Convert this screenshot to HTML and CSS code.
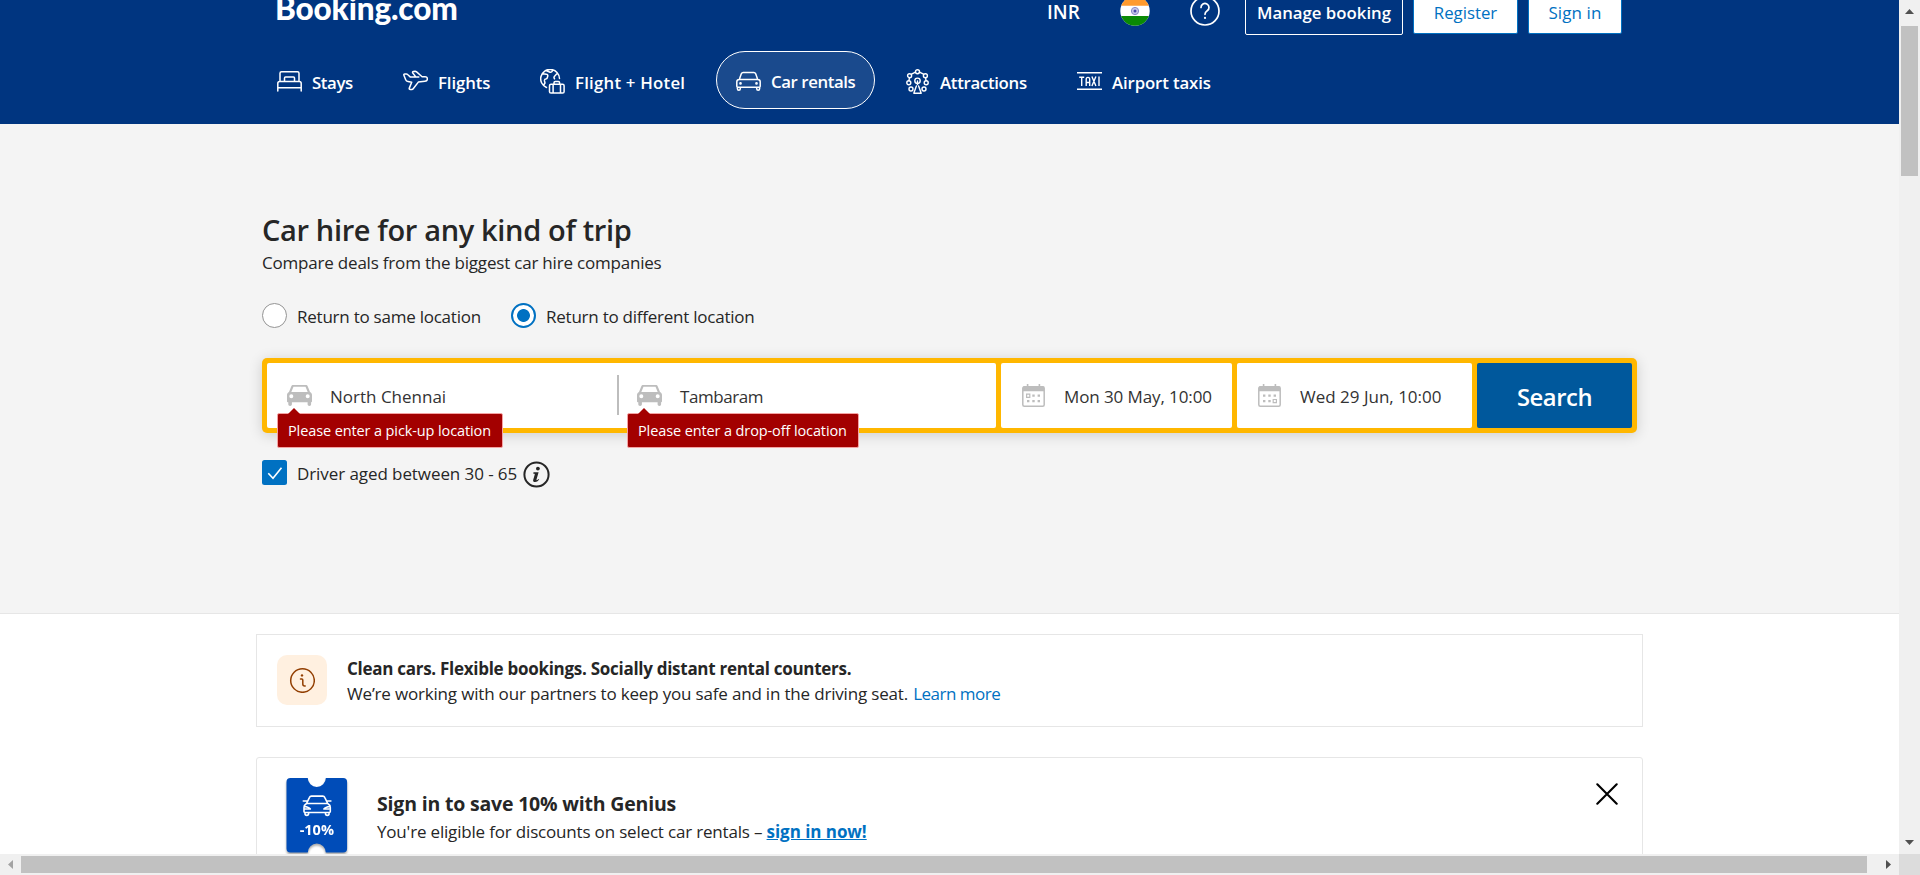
FILE: index.html
```html
<!DOCTYPE html>
<html lang="en">
<head>
<meta charset="utf-8">
<title>Booking.com | Car rentals</title>
<link rel="stylesheet" href="styles.css">
</head>
<body>
<svg width="0" height="0" class="defs" aria-hidden="true">
  <symbol id="car-solid" viewBox="0 0 25 21">
    <path fill="#bdbdbd" fill-rule="evenodd" d="M6.3 0h12.4c1 0 1.7.5 2.1 1.4L23 7c1.200.6 2 1.700 2 3v6.300c0 .6-.3 1-.9 1v2c0 .9-.7 1.700-1.700 1.700s-1.800-.8-1.800-1.700v-2H4.900v2c0 .9-.8 1.700-1.800 1.700s-1.800-.8-1.800-1.700v-2C.4 17.300 0 16.900 0 16.300V10c0-1.300.8-2.400 2-3l2.200-5.600C4.600.5 5.300 0 6.300 0zM6.500 1.700 4.300 7h16.400l-2.200-5.300zM4.300 9.300a2 2 0 1 0 0 4 2 2 0 0 0 0-4zm16.400 0a2 2 0 1 0 0 4 2 2 0 0 0 0-4z"/>
  </symbol>
</svg>
<div class="window">
  <main class="page">
    <header class="header">
      <div class="topbar">
        <a class="logo">Booking.com</a>
        <span class="currency">INR</span>
        <svg class="flag" width="30" height="30" viewBox="0 0 30 30">
          <clipPath id="round"><circle cx="15" cy="15" r="14.700"/></clipPath>
          <g clip-path="url(#round)">
            <path fill="#fff" d="M0 0h30v30H0z"/><path fill="#ff9a2e" d="M0 0h30v9.700H0z"/><path fill="#0a8a05" d="M0 20h30v10H0z"/>
          </g>
          <circle cx="15" cy="15" r="3.600" fill="#c9c9ea" stroke="#8787c8" stroke-width="1"/><circle cx="15" cy="15" r="1.500" fill="#4b4baa"/>
        </svg>
        <svg class="help" width="30" height="30" viewBox="0 0 30 30" fill="none" stroke="#fff" stroke-width="1.700" stroke-linecap="round">
          <circle cx="15" cy="15" r="14"/>
          <path d="M11 11.500a4 4 0 1 1 6.200 3.300c-1.400.9-2.200 1.700-2.200 3.500"/>
          <circle cx="15" cy="21.900" r="1.100" fill="#fff" stroke="none"/>
        </svg>
        <a class="btn btn-outline">Manage booking</a>
        <a class="btn btn-light">Register</a>
        <a class="btn btn-light btn-signin">Sign in</a>
      </div>
      <nav class="tabs">
        <a class="tab">
          <svg width="25" height="25" viewBox="0 0 25 25" fill="none" stroke="#fff" stroke-width="1.500" stroke-linecap="round" stroke-linejoin="round"><path d="M3 12.500V4.300c0-.9.6-1.500 1.500-1.500h16c.9 0 1.500.6 1.500 1.500v8.200M7.500 12V9c0-.6.400-1 1-1h8c.6 0 1 .4 1 1v3M.8 22v-7.600c0-1.200.8-1.900 1.900-1.900h19.600c1.100 0 1.900.7 1.900 1.900V22M1 18.800h23"/></svg>
          <span class="t-stays">Stays</span>
        </a>
        <a class="tab">
          <svg width="25" height="25" viewBox="0 0 25 25" fill="none" stroke="#fff" stroke-width="1.500" stroke-linecap="round" stroke-linejoin="round"><path d="M.9 6.200c-.3-.8.2-1.200.9-1.200h1.600c.5 0 .9.200 1.200.5l2.600 2.400h5.600l-3-3.900c-.5-.8-.2-1.400.6-1.500l1.700-.2c.6 0 1 .2 1.500.6l5.500 4.900h3c1.500 0 2.300 1 2.300 2.100s-1 2.200-2.500 2.400l-6.600.8-5.100 6.700c-.3.400-.8.600-1.300.6H7.200c-.8 0-1.200-.6-.9-1.300l2.400-5.900-3.700-.6c-1.100-.2-1.900-.8-2.300-1.900zM12.800 7.900h3"/></svg>
          <span class="t-flights">Flights</span>
        </a>
        <a class="tab">
          <svg width="25" height="25" viewBox="0 0 25 25" fill="none" stroke="#fff" stroke-width="1.500" stroke-linecap="round" stroke-linejoin="round"><path d="M6.500 18.500A9.400 9.400 0 1 1 19.500 9.500M2.500 4.800l4 .5c1 .1 1.500 1 1.200 1.900L7.200 9c-.2.700-.8 1-1.500 1.100-1 .1-1.400 1-1.200 1.900l.5 2-1 1.500M6 1.500 9.500 3c.8.400 1.600.3 2.200-.3l1.100-1.400M14.500 9.800c-.7-1-.6-2 .2-2.700l2.400-2.500"/><path d="M11 15.300h11.600c.9 0 1.500.6 1.500 1.400v6c0 .8-.6 1.400-1.500 1.400H11c-.9 0-1.500-.6-1.500-1.400v-6c0-.8.6-1.400 1.500-1.400zM14 15v-1.300c0-.8.500-1.300 1.300-1.300h3c.8 0 1.300.5 1.300 1.300V15M13.100 15.500V24M20.500 15.500V24"/></svg>
          <span class="t-combo">Flight + Hotel</span>
        </a>
        <a class="tab tab-active">
          <svg width="25" height="25" viewBox="0 0 25 25" fill="none" stroke="#fff" stroke-width="1.500" stroke-linecap="round" stroke-linejoin="round"><path d="m3.300 10.500 2-5.700C5.700 3.900 6.300 3.600 7.200 3.600h10.600c.9 0 1.500.3 1.900 1.200l2 5.700M3.300 10.500h18.400c1.500 0 2.500.9 2.500 2.300v4.400c0 .6-.4 1-1 1H1.800c-.6 0-1-.4-1-1v-4.400c0-1.400 1-2.300 2.500-2.300zM1.400 18.500v1.200c0 1 .6 1.500 1.400 1.500s1.500-.5 1.500-1.500v-1.200M20.700 18.500v1.200c0 1 .7 1.500 1.500 1.500s1.400-.5 1.400-1.500v-1.200"/><circle cx="4.500" cy="14.400" r=".6"/><circle cx="20.500" cy="14.400" r=".6"/></svg>
          <span class="t-cars">Car rentals</span>
        </a>
        <a class="tab">
          <svg width="23" height="25" viewBox="0 0 23 25" fill="none" stroke="#fff" stroke-width="1.400" stroke-linecap="round" stroke-linejoin="round"><circle cx="11.500" cy="2.700" r="2"/><circle cx="3.600" cy="6.700" r="2"/><circle cx="19.400" cy="6.700" r="2"/><circle cx="2.800" cy="13.800" r="2"/><circle cx="20.200" cy="13.800" r="2"/><circle cx="5" cy="20" r="2"/><circle cx="18" cy="20" r="2"/><circle cx="11.500" cy="11.800" r="2.700"/><path d="m10.400 17-2.600 7.200h7.400L12.600 17M9.500 3.200 5.500 5.200M13.500 3.200l4 2M3.400 8.700l-.4 3M19.600 8.700l.4 3M11.500 12v3.500"/></svg>
          <span class="t-attr">Attractions</span>
        </a>
        <a class="tab">
          <svg width="25" height="25" viewBox="0 0 25 25" fill="none" stroke="#fff" stroke-width="1.500" stroke-linejoin="round"><path d="M0 3.800h25M0 20.300h25"/><path stroke-width="1.400" d="M2.200 8.300h5M4.700 8.300V17M9.200 17v-6.700c0-2.600 3.500-2.600 3.500 0V17M9.200 13.500h3.500M14.900 7.600l4 9.400M18.900 7.600l-4 9.400M22 7.600V17"/></svg>
          <span class="t-taxi">Airport taxis</span>
        </a>
      </nav>
    </header>

    <section class="hero">
      <h1 class="title">Car hire for any kind of trip</h1>
      <p class="subtitle">Compare deals from the biggest car hire companies</p>
      <div class="radios">
        <label class="radio radio-same"><i class="dot"></i><span>Return to same location</span></label>
        <label class="radio radio-diff"><i class="dot dot-on"></i><span>Return to different location</span></label>
      </div>
      <div class="search">
        <div class="places">
          <div class="place">
            <svg width="25" height="21"><use href="#car-solid"/></svg><span>North Chennai</span>
            <div class="error error-pick">Please enter a pick-up location</div>
          </div>
          <div class="divider"></div>
          <div class="place place-drop">
            <svg width="25" height="21"><use href="#car-solid"/></svg><span class="t-drop">Tambaram</span>
            <div class="error error-drop">Please enter a drop-off location</div>
          </div>
        </div>
        <div class="date date-from">
          <svg width="23" height="23" viewBox="0 0 23 23" fill="none" stroke="#bdbdbd"><rect x=".8" y="2.800" width="21.400" height="19.400" rx="1.500" stroke-width="1.500"/><path fill="#bdbdbd" stroke="none" d="M1 2.500h21v4.800H1zM4.800 0h1.600v3H4.800zM16.600 0h1.600v3h-1.600z"/><g fill="#bdbdbd" stroke="none"><path d="M10.300 10.500h2.400v2.200h-2.400zM15.600 10.500H18v2.200h-2.400zM5 16h2.400v2.200H5zM10.300 16h2.400v2.200h-2.400zM15.600 16H18v2.200h-2.400z"/></g><path stroke-width="1.200" d="M4.600 10.100h3.200v3.200H4.600z"/></svg>
          <span class="t-from">Mon 30 May, 10:00</span>
        </div>
        <div class="date date-to">
          <svg width="23" height="23" viewBox="0 0 23 23" fill="none" stroke="#bdbdbd"><rect x=".8" y="2.800" width="21.400" height="19.400" rx="1.500" stroke-width="1.500"/><path fill="#bdbdbd" stroke="none" d="M1 2.500h21v4.800H1zM4.800 0h1.600v3H4.800zM16.600 0h1.600v3h-1.600z"/><g fill="#bdbdbd" stroke="none"><path d="M5 10.500h2.400v2.200H5zM10.300 10.500h2.400v2.200h-2.400zM15.600 10.500H18v2.200h-2.400zM5 16h2.400v2.200H5zM10.300 16h2.400v2.200h-2.400z"/></g><path stroke-width="1.200" d="M15.200 15.500h3.200v3.200h-3.200z"/></svg>
          <span>Wed 29 Jun, 10:00</span>
        </div>
        <button class="go">Search</button>
      </div>
      <div class="age">
        <svg width="25" height="25" viewBox="0 0 25 25"><rect width="25" height="25" rx="2.500" fill="#0071c2"/><path d="m6.300 13.200 4.700 5 8.500-10.500" fill="none" stroke="#fff" stroke-width="1.600"/></svg>
        <span class="age-text">Driver aged between 30 - 65</span>
        <svg width="27" height="27" viewBox="0 0 27 27"><circle cx="13.500" cy="13.500" r="12.100" fill="none" stroke="#262626" stroke-width="2"/><circle cx="14.900" cy="7.600" r="1.900" fill="#262626"/><path d="M10.500 11.200h5.100l-2.100 7.300c-.2.700.3.900.8.600l1.500-1.100.4.600c-1.200 1.700-2.700 2.500-4.100 2.500-1.600 0-2.300-1-1.900-2.400l1.500-5c.2-.7 0-1-.6-1h-.8z" fill="#262626"/></svg>
      </div>
    </section>

    <section class="cards">
      <article class="card notice">
        <div class="notice-icon">
          <svg width="26" height="26" viewBox="0 0 26 26" fill="none" stroke="#923e01" stroke-width="1.500" stroke-linecap="round"><circle cx="13.500" cy="13.500" r="11.800"/><path d="M11.500 12h1.300c.6 0 1 .4 1 1v3.900c0 1.200.7 2 1.900 2h.5"/><circle cx="13" cy="8.400" r="1.200" fill="#923e01" stroke="none"/></svg>
        </div>
        <div class="notice-body">
          <h2>Clean cars. Flexible bookings. Socially distant rental counters.</h2>
          <p>We’re working with our partners to keep you safe and in the driving seat. <a class="more">Learn more</a></p>
        </div>
      </article>
      <article class="card genius">
        <svg class="ticket" width="61" height="76" viewBox="0 0 61 76">
          <path fill="#004cb8" d="M4.500 0h17.300a9 9 0 0 0 18 0h17.300a4 4 0 0 1 4 4v66.500a4 4 0 0 1-4 4H39.800a9 9 0 0 0-18 0H4.500a4 4 0 0 1-4-4V4a4 4 0 0 1 4-4z"/>
          <g fill="none" stroke="#fff" stroke-width="1.600" stroke-linecap="round" stroke-linejoin="round"><path d="m20.500 25.500 3-6.200c.4-.9 1-1.200 1.900-1.200h11.400c.9 0 1.500.3 1.900 1.200l3 6.200M17.300 23h3.500M41.400 23h3.500M20.500 25.500h21.200c1.600.9 2.600 2.300 2.600 4v4c0 .6-.4 1-1 1H19c-.6 0-1-.4-1-1v-4c0-1.700 1-3.100 2.500-4zM19 34.700v1.100c0 1 .7 1.600 1.800 1.600s1.800-.6 1.800-1.600v-1.100M39.500 34.700v1.100c0 1 .7 1.600 1.800 1.600s1.800-.6 1.800-1.600v-1.100M18.300 28.500c2.400.2 4.600.6 6 2.500h-5M43.900 28.500c-2.400.2-4.600.6-6 2.500h5"/></g>
          <text x="30.800" y="56.500" text-anchor="middle" class="ticket-text">-10%</text>
        </svg>
        <div class="genius-body">
          <h2>Sign in to save 10% with Genius</h2>
          <p>You're eligible for discounts on select car rentals – <a class="now">sign in now!</a></p>
        </div>
        <svg class="close" width="22" height="22" viewBox="0 0 22 22"><path d="m1.300 1.300 19.400 19.400M20.700 1.300 1.300 20.700" stroke="#000" stroke-width="2.100" stroke-linecap="round"/></svg>
      </article>
    </section>
  </main>
  <div class="vbar">
    <svg width="21" height="26"><path d="M6 14h9L10.500 9z" fill="#505050"/></svg>
    <div class="vthumb"></div>
    <svg class="end" width="21" height="21"><path d="M6 7h9l-4.500 5z" fill="#505050"/></svg>
  </div>
  <div class="hbar">
    <svg width="21" height="21"><path d="M13 6v9l-5-4.500z" fill="#a3a3a3"/></svg>
    <div class="hthumb"></div>
    <svg class="end" width="21" height="21"><path d="M8 6v9l5-4.500z" fill="#505050"/></svg>
  </div>
  <div class="corner"></div>
</div>
</body>
</html>
```

FILE: styles.css
```css
* { box-sizing: border-box; }
body { margin: 0; font-family: "Open Sans", "Noto Sans", sans-serif; font-size: 17px; color: #262626; }
h1, h2, p { margin: 0; }
svg { display: block; flex: none; }
.defs { position: absolute; }
.window { display: grid; grid-template-columns: 1899px 21px; grid-template-rows: 854px 21px; width: 1920px; height: 875px; overflow: hidden; }
.page { overflow: hidden; background: #fff; white-space: nowrap; }

/* Header */
.header { height: 124px; background: #003580; color: #fff; overflow: hidden; font-weight: 600; }
.topbar { display: flex; height: 46px; margin-top: -11px; padding-left: 275px; }
.logo { width: 772px; padding-top: 1px; font: 900 31.500px/36px Lato, sans-serif; letter-spacing: -.15px; }
.currency { width: 73px; font-size: 19px; line-height: 46px; }
.flag { margin: 7px 40px 0 0; }
.help { margin: 7px 25px 0 0; }
.btn { display: block; font-size: 16.800px; line-height: 46px; text-align: center; border-radius: 2px; }
.btn-outline { width: 158px; height: 46px; margin-right: 10px; line-height: 45px; border: 1px solid #fff; letter-spacing: 0; }
.btn-light { width: 105px; height: 45px; margin-right: 10px; line-height: 45px; border: 1px solid #0071c2; background: #fff; color: #0071c2; font-weight: 500; }
.btn-signin { width: 94px; font-size: 17px; letter-spacing: .1px; }
.tabs { display: grid; grid-template-columns: 126px 137px 196px 170px 171px 174px; padding: 16px 0 0 257px; font-size: 16.800px; }
.tab { display: flex; align-items: center; gap: 10px; height: 58px; padding: 3px 0 0 20px; line-height: 26px; }
.tab span { padding-top: 2px; }
.tab-active { width: 159px; padding: 2px 0 0 19px; border: 1px solid #fff; border-radius: 29px; background: #1a4a8d; }
.t-stays { letter-spacing: -.4px; }
.t-flights { letter-spacing: -.1px; }
.t-combo { letter-spacing: .23px; }
.t-cars { letter-spacing: -.4px; }
.t-attr { margin-left: 1px; letter-spacing: -.3px; }
.t-taxi { letter-spacing: -.12px; }

/* Search form */
.hero { height: 490px; padding: 85px 0 0 262px; background: #f4f4f4; border-bottom: 1px solid #e6e6e6; }
.title { font-size: 29px; font-weight: 550; line-height: 41px; letter-spacing: -.35px; }
.subtitle { padding-top: 1px; line-height: 24px; letter-spacing: -.2px; }
.radios { display: flex; margin-top: 28px; }
.radio { display: flex; gap: 10px; line-height: 27px; height: 25px; letter-spacing: -.24px; }
.radio-same { width: 249px; }
.dot { width: 25px; height: 25px; border: 1px solid #949494; border-radius: 50%; background: #fff; }
.dot-on { border: 2px solid #0071c2; background: radial-gradient(circle, #0071c2 6px, #fff 6.800px); }
.search { display: flex; width: 1375px; height: 75px; margin-top: 30px; padding: 5px; border-radius: 5px; background: #ffb700; box-shadow: 0 2px 14px rgba(0, 0, 0, .16); font-weight: 500; color: #333; }
.places { display: flex; width: 729px; margin-right: 5px; background: #fff; border-radius: 2px; }
.place, .date { position: relative; display: flex; align-items: center; height: 65px; }
.place { width: 350px; gap: 18px; padding-left: 20px; }
.place-drop { padding-left: 18px; }
.place span, .date span { padding-top: 1px; }
.t-drop { letter-spacing: -.44px; }
.divider { width: 2px; height: 40px; margin-top: 12px; background: #bdbdbd; }
.error { position: absolute; top: 50px; height: 35px; padding-left: 10px; border: 1px solid #f5a3a3; border-radius: 2px; background: #a30000; color: #fff; font-size: 14.500px; font-weight: 400; line-height: 33px; letter-spacing: -.11px; }
.error::before { content: ""; position: absolute; left: 10px; top: -6px; border: 6px solid transparent; border-top: 0; border-bottom-color: #a30000; }
.error-pick { left: 10px; width: 226px; }
.error-drop { left: 8px; width: 232px; }
.date { background: #fff; border-radius: 2px; padding-left: 21px; gap: 19px; }
.date-from { width: 231px; margin-right: 5px; }
.date-to { width: 235px; margin-right: 5px; }
.t-from { letter-spacing: -.1px; }
.go { width: 155px; padding: 3px 0 0; border: 0; border-radius: 2px; background: #00589c; color: #fff; font: 600 23.800px "Open Sans", sans-serif; letter-spacing: -.45px; }
.age { display: flex; margin-top: 27px; line-height: 27px; }
.age-text { width: 236px; padding-left: 10px; letter-spacing: -.08px; }
.age svg:last-child { margin-top: 1px; }

/* Cards */
.cards { padding: 20px 0 0 256px; }
.card { display: flex; width: 1387px; border: 1px solid #e6e6e6; }
.notice { height: 93px; margin-bottom: 30px; padding: 20px; }
.notice-icon { width: 50px; height: 50px; padding: 12px; border-radius: 10px; background: #fff0e0; }
.notice-body { padding: 1px 0 0 20px; line-height: 25px; letter-spacing: -.18px; }
.notice-body h2 { font-size: 17px; font-weight: 700; letter-spacing: -.28px; }
.more { color: #0071c2; letter-spacing: -.5px; margin-left: 1px; }
.genius { height: 130px; padding: 20px 0 0 29px; border-radius: 3px; }
.ticket { overflow: visible; filter: drop-shadow(0 2px 1px rgba(0, 0, 0, .35)); }
.ticket-text { fill: #fff; font-size: 14.500px; font-weight: 700; }
.genius-body { width: 1249px; padding: 12px 0 0 30px; }
.genius-body h2 { font-size: 19.500px; font-weight: 700; line-height: 28px; letter-spacing: -.19px; }
.genius-body p { line-height: 28px; letter-spacing: -.18px; }
.now { color: #0071c2; font-weight: 700; letter-spacing: -.05px; text-decoration: underline; }
.close { margin-top: 5px; }

/* Scrollbars */
.vbar, .hbar { display: flex; background: #f0f0f0; }
.vbar { flex-direction: column; }
.vthumb { width: 17px; height: 150px; margin-left: 2px; background: #c1c1c1; }
.hthumb { width: 1846px; height: 17px; margin-top: 2px; background: #c1c1c1; }
.vbar .end { margin-top: auto; }
.hbar .end { margin-left: auto; }
.corner { background: #dcdcdc; }
```
